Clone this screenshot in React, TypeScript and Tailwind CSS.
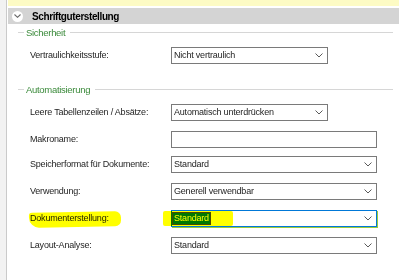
import React from 'react';

const Chevron = () => (
  <svg width="8" height="5" viewBox="0 0 8 5" className="shrink-0">
    <polyline points="0.5,0.5 4,4 7.5,0.5" fill="none" stroke="#5a5a5a" strokeWidth="1" />
  </svg>
);

interface BoxProps {
  wide?: boolean;
  value?: string;
  arrow?: boolean;
  focus?: boolean;
}

const Box: React.FC<BoxProps> = ({ wide, value = '', arrow = true, focus }) => (
  <div
    className={`h-[17px] flex items-center justify-between bg-white border pl-px pr-[4px] ${
      wide ? 'w-[206px]' : 'w-[157px]'
    } ${focus ? 'border-[#0078d7] shadow-[1px_1px_0_#9ccc3c]' : 'border-[#7a7a7a]'}`}
  >
    {focus ? (
      <span className="bg-[#0078d7] text-white px-px leading-[11px] outline outline-1 outline-[#4a4a20]">{value}</span>
    ) : (
      <span className="px-px">{value}</span>
    )}
    {arrow && <Chevron />}
  </div>
);

const Legend: React.FC<{ title: string; className?: string }> = ({ title, className }) => (
  <div className={`h-[11px] flex items-center ${className ?? ''}`}>
    <div className="ml-[10px] w-[6px] h-px bg-[#d6d6d6]" />
    <span className="ml-[2px] text-[#3b8a3b] text-[9.5px] tracking-[-0.3px] leading-none">{title}</span>
    <div className="ml-[5px] mr-[6px] flex-1 h-px bg-[#d6d6d6]" />
  </div>
);

const Row: React.FC<{ label: string; children: React.ReactNode; className?: string }> = ({ label, children, className }) => (
  <div className={`flex items-center h-[17px] pl-[22px] ${className ?? ''}`}>
    <div className="w-[141px] shrink-0">{label}</div>
    {children}
  </div>
);

export default function App() {
  return (
    <div className="w-[399px] h-[280px] overflow-hidden bg-white flex font-['Liberation_Sans',Arial,sans-serif] text-[9px] tracking-[-0.2px] text-[#1e1e1e]">
      <div className="w-[7px] shrink-0 bg-[#f2f2f2] border-r border-[#cacaca]" />
      <div className="flex-1 ml-px relative">
        <div className="h-[6px] bg-[#fdfbc4]" />
        <div className="mt-[2px] h-[16px] bg-[#d4d4d4] flex items-center pl-[4px]">
          <div className="w-[11px] h-[11px] rounded-full bg-white flex items-center justify-center">
            <svg width="7" height="4" viewBox="0 0 7 4">
              <polyline points="0.5,0.5 3.5,3.3 6.5,0.5" fill="none" stroke="#6a6a6a" strokeWidth="1.1" />
            </svg>
          </div>
          <span className="ml-[9px] font-bold text-[10px] tracking-[-0.4px] text-black">Schriftguterstellung</span>
        </div>

        <Legend title="Sicherheit" className="mt-[3px]" />
        <Row label="Vertraulichkeitsstufe:" className="mt-[9px]">
          <Box value="Nicht vertraulich" />
        </Row>

        <Legend title="Automatisierung" className="mt-[20px]" />
        <Row label="Leere Tabellenzeilen / Absätze:" className="mt-[9px]">
          <Box value="Automatisch unterdrücken" />
        </Row>
        <Row label="Makroname:" className="mt-[10px]">
          <Box wide arrow={false} />
        </Row>
        <Row label="Speicherformat für Dokumente:" className="mt-[8px]">
          <Box wide value="Standard" />
        </Row>
        <Row label="Verwendung:" className="mt-[10px]">
          <Box wide value="Generell verwendbar" />
        </Row>
        <Row label="Dokumenterstellung:" className="mt-[10px]">
          <Box wide value="Standard" focus />
        </Row>
        <Row label="Layout-Analyse:" className="mt-[10px]">
          <Box wide value="Standard" />
        </Row>

        {/* highlighter marks */}
        <div className="absolute left-[21px] top-[212px] w-[92px] h-[15px] bg-[#ffff00] mix-blend-multiply rounded-[3px_6px_6px_10px] -rotate-1" />
        <div className="absolute left-[155px] top-[211px] w-[70px] h-[15px] bg-[#ffff00] mix-blend-multiply rounded-[2px]" />
      </div>
    </div>
  );
}
